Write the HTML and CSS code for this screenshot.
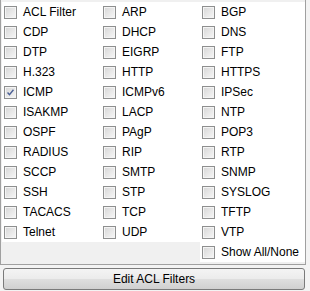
FILE: index.html
```html
<!DOCTYPE html>
<html lang="en">
<head>
    <meta charset="UTF-8">
    <title>ACL Filters</title>
    <link rel="stylesheet" href="styles.css">
</head>
<body>
    <div class="filters">
        <ul class="col">
            <li><span class="box"></span>ACL Filter</li>
            <li><span class="box"></span>CDP</li>
            <li><span class="box"></span>DTP</li>
            <li><span class="box"></span>H.323</li>
            <li><span class="box checked"><svg viewBox="0 0 13 13"><path d="M3 6.5 L5.3 9.2 L10 3.2" /></svg></span>ICMP</li>
            <li><span class="box"></span>ISAKMP</li>
            <li><span class="box"></span>OSPF</li>
            <li><span class="box"></span>RADIUS</li>
            <li><span class="box"></span>SCCP</li>
            <li><span class="box"></span>SSH</li>
            <li><span class="box"></span>TACACS</li>
            <li><span class="box"></span>Telnet</li>
        </ul>
        <ul class="col">
            <li><span class="box"></span>ARP</li>
            <li><span class="box"></span>DHCP</li>
            <li><span class="box"></span>EIGRP</li>
            <li><span class="box"></span>HTTP</li>
            <li><span class="box"></span>ICMPv6</li>
            <li><span class="box"></span>LACP</li>
            <li><span class="box"></span>PAgP</li>
            <li><span class="box"></span>RIP</li>
            <li><span class="box"></span>SMTP</li>
            <li><span class="box"></span>STP</li>
            <li><span class="box"></span>TCP</li>
            <li><span class="box"></span>UDP</li>
        </ul>
        <ul class="col">
            <li><span class="box"></span>BGP</li>
            <li><span class="box"></span>DNS</li>
            <li><span class="box"></span>FTP</li>
            <li><span class="box"></span>HTTPS</li>
            <li><span class="box"></span>IPSec</li>
            <li><span class="box"></span>NTP</li>
            <li><span class="box"></span>POP3</li>
            <li><span class="box"></span>RTP</li>
            <li><span class="box"></span>SNMP</li>
            <li><span class="box"></span>SYSLOG</li>
            <li><span class="box"></span>TFTP</li>
            <li><span class="box"></span>VTP</li>
            <li><span class="box"></span>Show All/None</li>
        </ul>
    </div>
    <button type="button" class="edit">Edit ACL Filters</button>
</body>
</html>
```

FILE: styles.css
```css
body {
    font-family: "Liberation Sans", Arial, sans-serif;
    font-size: 12px;
    color: #000;
    margin: 0;
    padding: 0;
    width: 310px;
    background-color: #f3f3f3;
}

.filters {
    box-sizing: border-box;
    width: 306px;
    display: grid;
    grid-template-columns: 99px 99px 1fr;
    align-items: start;
    padding: 2px 0 2px 1px;
    background-color: #f0f0f0;
    border: 1px solid #a0a0a0;
    border-top: none;
}

.col {
    list-style: none;
    margin: 0;
    padding: 0;
    background-color: #fff;
    overflow: hidden;
}

.col li {
    display: flex;
    align-items: center;
    gap: 6px;
    height: 20px;
    padding-left: 2px;
    white-space: nowrap;
}

.box {
    box-sizing: border-box;
    flex: none;
    width: 13px;
    height: 13px;
    border: 1px solid #8e8f8f;
    background: linear-gradient(135deg, #d6d6d6, #f7f7f7);
    box-shadow: inset 0 0 0 1px #f4f4f4;
}

.box svg {
    display: block;
    width: 11px;
    height: 11px;
}

.box svg path {
    fill: none;
    stroke: #4a5f95;
    stroke-width: 1.6;
}

.edit {
    display: block;
    box-sizing: border-box;
    width: 302px;
    height: 22px;
    margin: 3px 0 0 3px;
    padding: 0;
    font-family: inherit;
    font-size: 12px;
    color: #000;
    border: 1px solid #7a7a7a;
    border-radius: 3px;
    background: linear-gradient(#f4f4f4 0%, #ececec 48%, #dedede 52%, #d0d0d0 100%);
}
```
